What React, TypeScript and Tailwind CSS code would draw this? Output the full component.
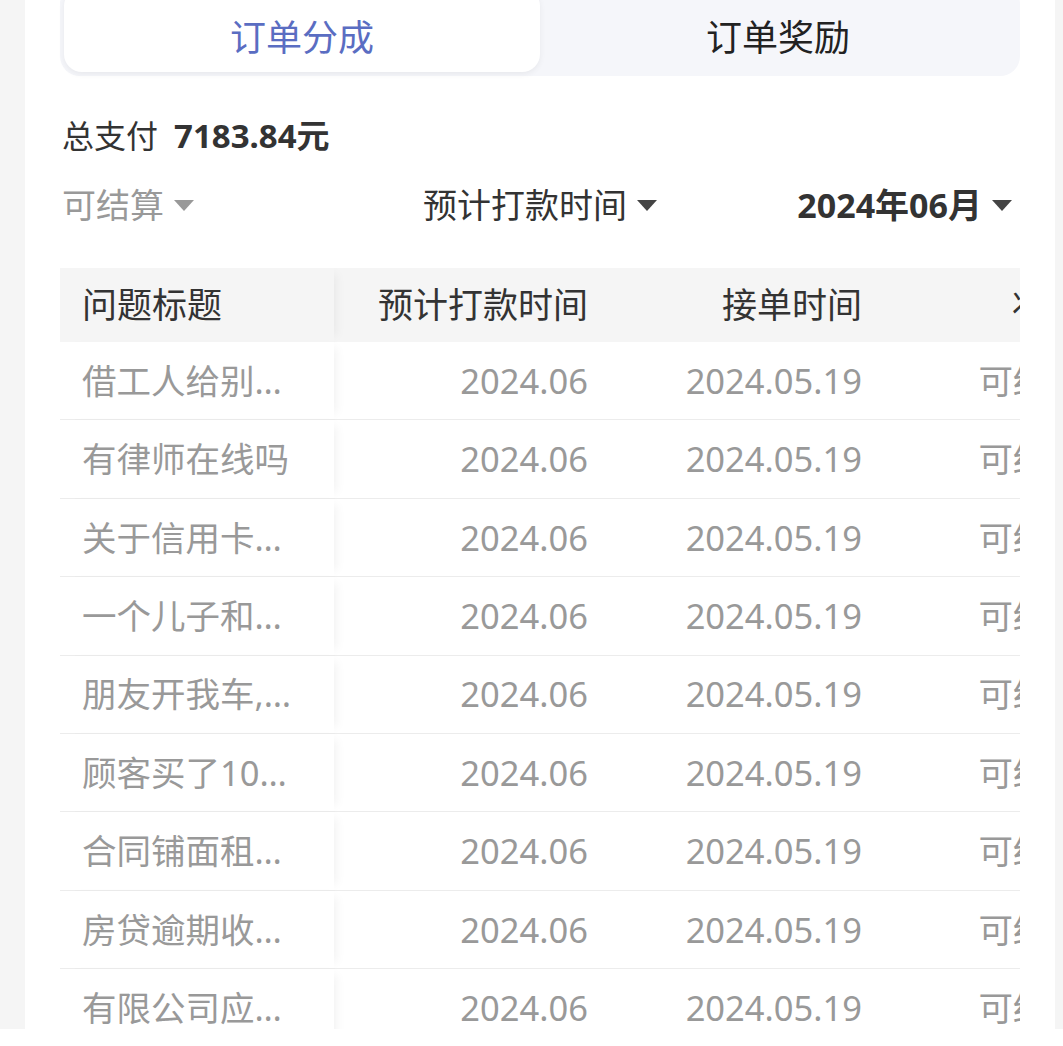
import React from "react";

const rows: string[] = [
  "借工人给别人干活受伤怎么办",
  "有律师在线吗",
  "关于信用卡逾期的问题",
  "一个儿子和女儿的遗产分配",
  "朋友开我车,出了事故",
  "顾客买了10件衣服要退款",
  "合同铺面租赁纠纷",
  "房贷逾期收到律师函",
  "有限公司应该如何注销",
];

const Caret: React.FC<{ color: string }> = ({ color }) => (
  <svg width="20" height="11" viewBox="0 0 20 11" className="ml-[10px] shrink-0">
    <polygon points="0,0 20,0 10,11" fill={color} />
  </svg>
);

const App: React.FC = () => {
  return (
    <div
      className="w-[1063px] h-[1046px] overflow-hidden bg-white flex flex-col"
      style={{ fontFamily: '"Noto Sans", "Noto Sans CJK SC", sans-serif' }}
    >
      <div className="h-[1029px] bg-[#f5f5f5] flex shrink-0">
        <div className="w-[25px] shrink-0" />
        <div className="w-[1030px] shrink-0 bg-white pl-[35px] pr-[35px] flex flex-col overflow-hidden">
          {/* Tabs */}
          <div className="-mt-[16px] h-[92px] rounded-[20px] bg-[#f5f6fa] p-[4px] flex shrink-0">
            <div className="flex-1 rounded-[18px] bg-white shadow-[0_2px_6px_rgba(0,0,0,0.06)] flex items-center justify-center pt-[16px] text-[36px] text-[#5a6dc2]">
              订单分成
            </div>
            <div className="flex-1 flex items-center justify-center pt-[16px] text-[36px] text-[#222]">
              订单奖励
            </div>
          </div>

          {/* Total */}
          <div className="mt-[36px] h-[48px] pl-[2px] flex items-center text-[32px] text-[#333] shrink-0">
            总支付<span className="ml-[16px] font-bold text-[33px]">7183.84元</span>
          </div>

          {/* Filters */}
          <div className="mt-[20px] h-[48px] grid grid-cols-3 items-center text-[34px] shrink-0">
            <div className="flex items-center pl-[2px] text-[#999]">
              可结算<Caret color="#999" />
            </div>
            <div className="flex items-center justify-center text-[#333]">
              预计打款时间<Caret color="#444" />
            </div>
            <div className="flex items-center justify-end pr-[8px] font-bold text-[#333]">
              2024年06月<Caret color="#444" />
            </div>
          </div>

          {/* Table */}
          <div className="mt-[40px] flex-1 overflow-hidden">
            <div className="w-[1060px]">
              <div className="h-[74px] grid grid-cols-[274px_276px_274px_220px] bg-[#f5f5f5] text-[35px] text-[#333]">
                <div className="relative z-10 bg-[#f5f5f5] pl-[22px] flex items-center shadow-[8px_0_10px_-6px_rgba(0,0,0,0.06)]">
                  问题标题
                </div>
                <div className="pr-[22px] flex items-center justify-end">预计打款时间</div>
                <div className="pr-[22px] flex items-center justify-end">接单时间</div>
                <div className="pr-[22px] flex items-center justify-end">状态</div>
              </div>
              {rows.map((title, i) => (
                <div
                  key={i}
                  className="h-[78.4px] grid grid-cols-[274px_276px_274px_220px] border-b border-[#ececec] text-[34.5px] text-[#999]"
                >
                  <div className="relative z-10 bg-white pl-[22px] pr-[22px] flex items-center min-w-0 shadow-[8px_0_10px_-6px_rgba(0,0,0,0.06)]">
                    <span className="block whitespace-nowrap overflow-hidden text-ellipsis">{title}</span>
                  </div>
                  <div className="pr-[22px] flex items-center justify-end">2024.06</div>
                  <div className="pr-[22px] flex items-center justify-end">2024.05.19</div>
                  <div className="pr-[22px] flex items-center justify-end">可结算</div>
                </div>
              ))}
            </div>
          </div>
        </div>
        <div className="flex-1" />
      </div>
    </div>
  );
};

export default App;
